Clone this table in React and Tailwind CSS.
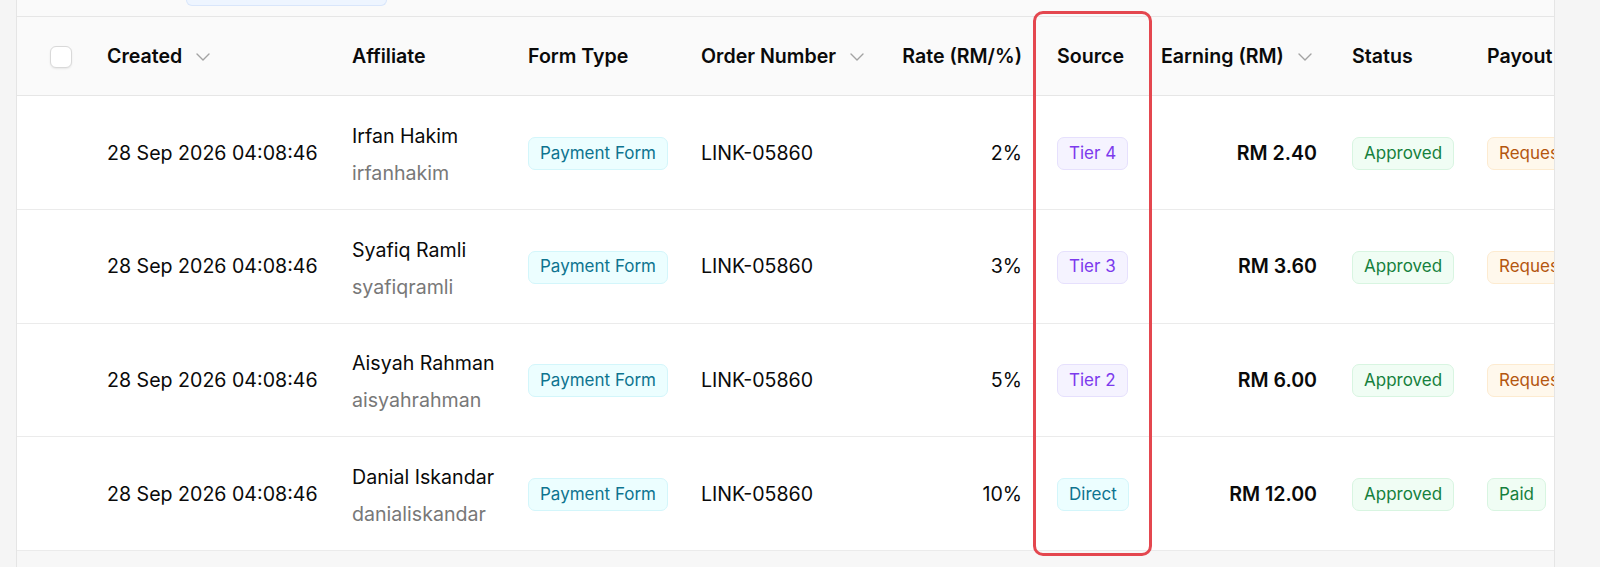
const rows = [
  { name: "Irfan Hakim", user: "irfanhakim", rate: "2%", source: "Tier 4", earning: "RM 2.40", payout: "Requested" },
  { name: "Syafiq Ramli", user: "syafiqramli", rate: "3%", source: "Tier 3", earning: "RM 3.60", payout: "Requested" },
  { name: "Aisyah Rahman", user: "aisyahrahman", rate: "5%", source: "Tier 2", earning: "RM 6.00", payout: "Requested" },
  { name: "Danial Iskandar", user: "danialiskandar", rate: "10%", source: "Direct", earning: "RM 12.00", payout: "Paid" },
];

const tones = {
  cyan: "bg-[#ecfeff] border-[#d3f6fb] text-[#0e7490]",
  violet: "bg-[#f5f3ff] border-[#e6e0fd] text-[#7c3aed]",
  green: "bg-[#f0fdf4] border-[#d8f5e1] text-[#15803d]",
  amber: "bg-[#fff8ec] border-[#fdebd0] text-[#b4560f]",
};

function Badge({ tone, children }) {
  return (
    <span
      className={
        "inline-flex h-[33px] items-center rounded-[7px] border px-[11px] text-[17px] whitespace-nowrap " +
        tones[tone]
      }
    >
      {children}
    </span>
  );
}

function Chevron() {
  return (
    <svg width="14" height="8" viewBox="0 0 14 8" fill="none" className="ml-[14px] shrink-0">
      <path d="M1 1l6 6 6-6" stroke="#a3a3a3" strokeWidth="1.4" strokeLinecap="round" strokeLinejoin="round" />
    </svg>
  );
}

function Checkbox() {
  return (
    <span className="block h-[22px] w-[22px] rounded-[6px] border border-[#d9d9d9] bg-white shadow-[0_1px_2px_rgba(0,0,0,0.08)]" />
  );
}

export default function App() {
  return (
    <div className="relative flex h-[567px] w-full overflow-hidden bg-[#f5f5f5] pl-4 font-[Inter,sans-serif] text-[19.6px] text-[#0a0a0a]">
      {/* CARD */}
      <div className="flex w-[1539px] flex-col overflow-hidden border-x border-[#e5e5e5] bg-[#fafafa]">
        {/* tab strip remnant */}
        <div className="h-4 shrink-0">
          <div className="ml-[169px] h-[6px] w-[201px] rounded-b-[9px] border border-t-0 border-[#d9e6fb] bg-[#eef5ff]" />
        </div>

        {/* HEADER */}
        <div className="flex h-[80px] shrink-0 items-center border-y border-[#e6e6e6] bg-[#fafafa] pt-[2px] font-semibold">
          <div className="w-[74px] shrink-0 pl-[33px]">
            <Checkbox />
          </div>
          <div className="flex w-[245px] shrink-0 items-center pl-4">
            Created
            <Chevron />
          </div>
          <div className="w-[176px] shrink-0 pl-4">Affiliate</div>
          <div className="w-[173px] shrink-0 pl-4">Form Type</div>
          <div className="flex w-[190px] shrink-0 items-center pl-4">
            Order Number
            <Chevron />
          </div>
          <div className="w-[166px] shrink-0 pr-[19px] text-right">Rate (RM/%)</div>
          <div className="w-[104px] shrink-0 pl-4">Source</div>
          <div className="flex w-[191px] shrink-0 items-center pl-4">
            Earning (RM)
            <Chevron />
          </div>
          <div className="w-[135px] shrink-0 pl-4">Status</div>
          <div className="w-[200px] shrink-0 pl-4">Payout</div>
        </div>

        {/* ROWS */}
        <div className="bg-white">
          {rows.map((r) => (
            <div key={r.user} className="flex h-[113.75px] items-center border-b border-[#ebebeb] pt-[2px]">
              <div className="w-[74px] shrink-0" />
              <div className="w-[245px] shrink-0 pl-4 whitespace-nowrap">28 Sep 2026 04:08:46</div>
              <div className="flex w-[176px] shrink-0 flex-col gap-[9px] pt-[2px] pl-4 whitespace-nowrap">
                <span className="leading-7">{r.name}</span>
                <span className="leading-7 text-[#787878]">{r.user}</span>
              </div>
              <div className="w-[173px] shrink-0 pl-4">
                <Badge tone="cyan">Payment Form</Badge>
              </div>
              <div className="w-[190px] shrink-0 pl-4">LINK-05860</div>
              <div className="w-[166px] shrink-0 pr-[19px] text-right">{r.rate}</div>
              <div className="w-[104px] shrink-0 pl-4">
                <Badge tone={r.source === "Direct" ? "cyan" : "violet"}>{r.source}</Badge>
              </div>
              <div className="w-[191px] shrink-0 pr-[19px] text-right font-semibold">{r.earning}</div>
              <div className="w-[135px] shrink-0 pl-4">
                <Badge tone="green">Approved</Badge>
              </div>
              <div className="w-[200px] shrink-0 pl-4">
                <Badge tone={r.payout === "Paid" ? "green" : "amber"}>{r.payout}</Badge>
              </div>
            </div>
          ))}
        </div>

        {/* footer strip */}
        <div className="flex-1 bg-[#f7f7f7]" />
      </div>

      {/* highlight annotation */}
      <div className="pointer-events-none absolute left-[1033px] top-[11px] h-[545px] w-[119px] rounded-[10px] border-[3px] border-[#e4474f]" />
    </div>
  );
}
